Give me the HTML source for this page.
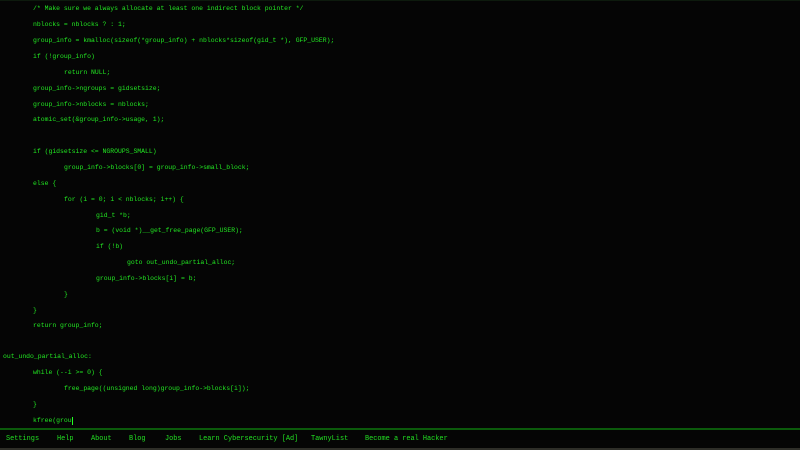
<!DOCTYPE html>
<html><head><meta charset="utf-8"><style>
html,body{margin:0;padding:0;width:800px;height:450px;background:#050505;overflow:hidden}
.c{position:absolute;left:0;font-family:"Liberation Mono",monospace;font-size:6.45px;color:#22e822;white-space:pre;line-height:8px;margin-top:1px}
.top{position:absolute;top:0;left:0;width:800px;height:1px;background:#0d1a0d}
.ft{position:absolute;top:428px;left:0;width:800px;height:2px;background:#0b5a0b}
.bt{position:absolute;top:448px;left:0;width:800px;height:2px;background:#2e2e28}
.n{position:absolute;top:435px;font-family:"Liberation Mono",monospace;font-size:6.9px;color:#22e022;white-space:pre;line-height:8px}
.cur{display:inline-block;width:1px;height:8px;background:#2f2;vertical-align:top}
</style></head><body>
<div class="top"></div>
<div class="c" style="top:4px;left:33px">/* Make sure we always allocate at least one indirect block pointer */</div>
<div class="c" style="top:20px;left:33px">nblocks = nblocks ? : 1;</div>
<div class="c" style="top:36px;left:33px">group_info = kmalloc(sizeof(*group_info) + nblocks*sizeof(gid_t *), GFP_USER);</div>
<div class="c" style="top:52px;left:33px">if (!group_info)</div>
<div class="c" style="top:68px;left:64px">return NULL;</div>
<div class="c" style="top:84px;left:33px">group_info-&gt;ngroups = gidsetsize;</div>
<div class="c" style="top:100px;left:33px">group_info-&gt;nblocks = nblocks;</div>
<div class="c" style="top:115px;left:33px">atomic_set(&amp;group_info-&gt;usage, 1);</div>
<div class="c" style="top:147px;left:33px">if (gidsetsize &lt;= NGROUPS_SMALL)</div>
<div class="c" style="top:163px;left:64px">group_info-&gt;blocks[0] = group_info-&gt;small_block;</div>
<div class="c" style="top:179px;left:33px">else {</div>
<div class="c" style="top:195px;left:64px">for (i = 0; i &lt; nblocks; i++) {</div>
<div class="c" style="top:211px;left:96px">gid_t *b;</div>
<div class="c" style="top:226px;left:96px">b = (void *)__get_free_page(GFP_USER);</div>
<div class="c" style="top:242px;left:96px">if (!b)</div>
<div class="c" style="top:258px;left:127px">goto out_undo_partial_alloc;</div>
<div class="c" style="top:274px;left:96px">group_info-&gt;blocks[i] = b;</div>
<div class="c" style="top:290px;left:64px">}</div>
<div class="c" style="top:306px;left:33px">}</div>
<div class="c" style="top:321px;left:33px">return group_info;</div>
<div class="c" style="top:352px;left:3px">out_undo_partial_alloc:</div>
<div class="c" style="top:368px;left:33px">while (--i &gt;= 0) {</div>
<div class="c" style="top:384px;left:64px">free_page((unsigned long)group_info-&gt;blocks[i]);</div>
<div class="c" style="top:400px;left:33px">}</div>
<div class="c" style="top:416px;left:33px">kfree(grou<span class="cur"></span></div>
<div class="ft"></div>
<div class="n" style="left:6px">Settings</div>
<div class="n" style="left:57px">Help</div>
<div class="n" style="left:91px">About</div>
<div class="n" style="left:129px">Blog</div>
<div class="n" style="left:165px">Jobs</div>
<div class="n" style="left:199px">Learn Cybersecurity [Ad]</div>
<div class="n" style="left:311px">TawnyList</div>
<div class="n" style="left:365px">Become a real Hacker</div>
<div class="bt"></div>
</body></html>
